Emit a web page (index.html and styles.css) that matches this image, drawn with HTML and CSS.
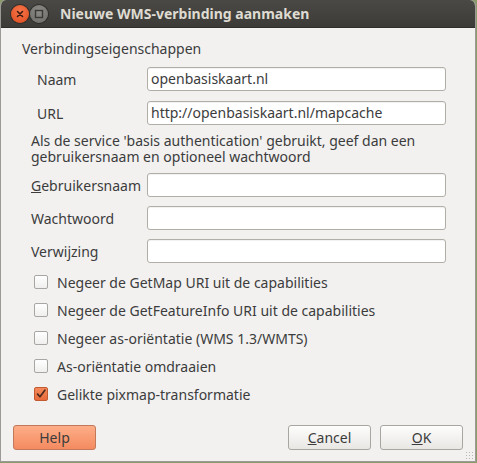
FILE: index.html
```html
<!DOCTYPE html>
<html>
<head>
<meta charset="utf-8">
<link rel="stylesheet" href="styles.css">
</head>
<body>
<div class="window">
  <div class="titlebar">
    <span class="wbtn close"><svg width="16" height="16" viewBox="0 0 16 16"><path d="M5.5 5.5l5 5M10.5 5.5l-5 5" stroke="#3a1a10" stroke-width="1.6" stroke-linecap="round"/></svg></span>
    <span class="wbtn mini"><svg width="16" height="16" viewBox="0 0 16 16"><rect x="4.5" y="4.5" width="7" height="7" fill="none" stroke="#3a3935" stroke-width="1.4"/></svg></span>
    <span class="title">Nieuwe WMS-verbinding aanmaken</span>
  </div>
  <div class="content">
    <div class="group">
      <div class="heading">Verbindingseigenschappen</div>
      <div class="rows rows-top">
        <label class="lbl indent">Naam</label>
        <div class="input">openbasiskaart.nl</div>
        <label class="lbl indent">URL</label>
        <div class="input">http://openbasiskaart.nl/mapcache</div>
      </div>
      <p class="note">Als de service 'basis authentication' gebruikt, geef dan een gebruikersnaam en optioneel wachtwoord</p>
      <div class="rows rows-auth">
        <label class="lbl"><u>G</u>ebruikersnaam</label>
        <div class="input"></div>
        <label class="lbl">Wachtwoord</label>
        <div class="input"></div>
        <label class="lbl">Verwijzing</label>
        <div class="input"></div>
      </div>
      <div class="checks">
        <div class="check"><span class="box"></span>Negeer de GetMap URI uit de capabilities</div>
        <div class="check"><span class="box"></span>Negeer de GetFeatureInfo URI uit de capabilities</div>
        <div class="check"><span class="box"></span>Negeer as-oriëntatie (WMS 1.3/WMTS)</div>
        <div class="check"><span class="box"></span>As-oriëntatie omdraaien</div>
        <div class="check"><span class="box checked"><svg width="14" height="14" viewBox="0 0 14 14"><path d="M3 7.2l2.8 3L11.5 2.5" fill="none" stroke="#4a2a1c" stroke-width="2" stroke-linecap="round" stroke-linejoin="round"/></svg></span>Gelikte pixmap-transformatie</div>
      </div>
    </div>
    <div class="buttons">
      <button class="btn help">Help</button>
      <div class="right">
        <button class="btn"><u>C</u>ancel</button>
        <button class="btn"><u>O</u>K</button>
      </div>
    </div>
  </div>
  <div class="grip"></div>
</div>
</body>
</html>
```
FILE: styles.css
```css
html, body {
  margin: 0;
  padding: 0;
  background: #8a9a6a;
}
body {
  width: 477px;
  height: 463px;
  font-family: "Noto Sans", "Open Sans", sans-serif;
  font-size: 14px;
  color: #3c3c3c;
}
.window {
  position: relative;
  width: 476px;
  height: 462px;
  box-sizing: border-box;
  background: #f2f1f0;
  border: 1px solid #9b9a97;
  border-top: none;
  border-radius: 6px 6px 0 0;
  display: flex;
  flex-direction: column;
  overflow: hidden;
}
.titlebar {
  height: 28px;
  flex: none;
  background: linear-gradient(#4a4945, #3c3b37);
  display: flex;
  align-items: center;
  padding-left: 10px;
  box-sizing: border-box;
  border-bottom: 1px solid #2f2e2b;
}
.wbtn {
  width: 18px;
  height: 18px;
  border-radius: 50%;
  display: flex;
  align-items: center;
  justify-content: center;
  margin-right: 1px;
}
.close {
  background: radial-gradient(circle at 50% 35%, #f7764a, #dd4a1e);
  box-shadow: 0 0 0 1px #2e2d2a;
}
.mini {
  background: radial-gradient(circle at 50% 35%, #8c8b87, #6b6a66);
  box-shadow: 0 0 0 1px #2e2d2a;
}
.title {
  margin-left: 11px;
  color: #dfdbd2;
  font-weight: bold;
  font-size: 14px;
}
.content {
  flex: 1;
  padding: 13px 12px 0 12px;
  display: flex;
  flex-direction: column;
}
.group {
  padding-left: 9px;
}
.heading {
  line-height: 16px;
}
.rows {
  display: grid;
  grid-template-columns: 125px 299px;
  align-items: center;
}
.rows-top {
  margin-top: 10px;
  row-gap: 10px;
}
.rows-auth {
  margin-top: 8px;
  row-gap: 9px;
}
.lbl {
  padding-left: 9px;
}
.indent {
  padding-left: 15px;
}
.input {
  height: 24px;
  box-sizing: border-box;
  background: #fff;
  border: 1px solid #b1aea8;
  border-radius: 3px;
  box-shadow: inset 0 1px 1px rgba(0,0,0,0.06);
  padding: 0 3px;
  line-height: 22px;
  color: #3c3c3c;
}
.note {
  margin: 8px 0 0 9px;
  line-height: 16px;
  width: 420px;
}
.checks {
  margin-top: 5px;
  padding-left: 12px;
}
.check {
  height: 28px;
  display: flex;
  align-items: center;
}
.box {
  width: 14px;
  height: 14px;
  box-sizing: border-box;
  border: 1px solid #a8a6a2;
  border-radius: 2px;
  background: linear-gradient(#ffffff, #f0efee);
  margin-right: 9px;
  display: flex;
  align-items: center;
  justify-content: center;
}
.box.checked {
  background: linear-gradient(#f5895b, #e86a3a);
  border-color: #c25a30;
}
.buttons {
  margin-top: 17px;
  display: flex;
  justify-content: space-between;
}
.right {
  display: flex;
  gap: 9px;
}
.btn {
  width: 83px;
  height: 25px;
  font-family: inherit;
  font-size: 14px;
  color: #3c3c3c;
  border: 1px solid #a8a6a1;
  border-radius: 3px;
  background: linear-gradient(#fdfdfc, #e9e7e4);
  padding: 0;
}
.btn.help {
  background: linear-gradient(#fdae88, #f48a60);
  border-color: #c4785a;
}
.grip {
  position: absolute;
  right: 2px;
  bottom: 2px;
  width: 8px;
  height: 8px;
  background-image: radial-gradient(circle, #b9b7b3 0.8px, transparent 1px);
  background-size: 3px 3px;
}
```
